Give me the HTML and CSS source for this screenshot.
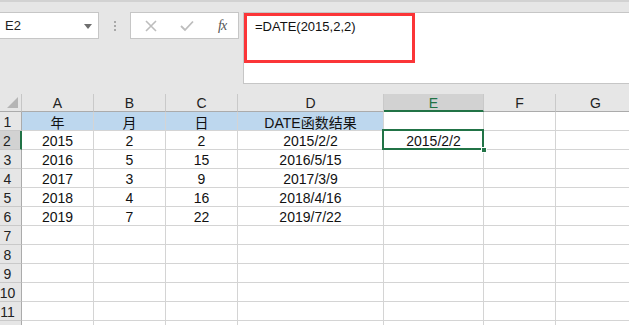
FILE: index.html
```html
<!DOCTYPE html>
<html lang="zh">
<head>
<meta charset="utf-8">
<link rel="stylesheet" href="styles.css">
</head>
<body>
<div class="toolbar">
  <div class="namebox">
    <span class="name">E2</span>
    <svg class="caret" width="8" height="5" viewBox="0 0 8 5"><path d="M0 0H8L4 5Z" fill="#6e6e6e"/></svg>
  </div>
  <div class="sep"><span></span><span></span><span></span></div>
  <div class="btns">
    <svg class="ico" width="12" height="12" viewBox="0 0 12 12"><path d="M1 1L11 11M11 1L1 11" stroke="#bdbdbd" stroke-width="1.6"/></svg>
    <svg class="ico" width="14" height="12" viewBox="0 0 14 12"><path d="M1 6L5 10L13 1.5" stroke="#bdbdbd" stroke-width="1.8" fill="none"/></svg>
    <span class="fx">fx</span>
  </div>
  <div class="formula">
    <div class="hl">=DATE(2015,2,2)</div>
  </div>
</div>
<div class="sheet">
  <div class="corner"><span class="tri"></span></div>
  <div class="ch">A</div><div class="ch">B</div><div class="ch">C</div><div class="ch">D</div><div class="ch sel">E</div><div class="ch">F</div><div class="ch last">G</div>

  <div class="rh">1</div>
  <div class="c blue">年</div><div class="c blue">月</div><div class="c blue">日</div><div class="c blue">DATE函数结果</div><div class="c"></div><div class="c"></div><div class="c last"></div>

  <div class="rh rsel">2</div>
  <div class="c">2015</div><div class="c">2</div><div class="c">2</div><div class="c">2015/2/2</div><div class="c active">2015/2/2<span class="handle"></span></div><div class="c"></div><div class="c last"></div>

  <div class="rh">3</div>
  <div class="c">2016</div><div class="c">5</div><div class="c">15</div><div class="c">2016/5/15</div><div class="c"></div><div class="c"></div><div class="c last"></div>

  <div class="rh">4</div>
  <div class="c">2017</div><div class="c">3</div><div class="c">9</div><div class="c">2017/3/9</div><div class="c"></div><div class="c"></div><div class="c last"></div>

  <div class="rh">5</div>
  <div class="c">2018</div><div class="c">4</div><div class="c">16</div><div class="c">2018/4/16</div><div class="c"></div><div class="c"></div><div class="c last"></div>

  <div class="rh">6</div>
  <div class="c">2019</div><div class="c">7</div><div class="c">22</div><div class="c">2019/7/22</div><div class="c"></div><div class="c"></div><div class="c last"></div>

  <div class="rh">7</div>
  <div class="c"></div><div class="c"></div><div class="c"></div><div class="c"></div><div class="c"></div><div class="c"></div><div class="c last"></div>

  <div class="rh">8</div>
  <div class="c"></div><div class="c"></div><div class="c"></div><div class="c"></div><div class="c"></div><div class="c"></div><div class="c last"></div>

  <div class="rh">9</div>
  <div class="c"></div><div class="c"></div><div class="c"></div><div class="c"></div><div class="c"></div><div class="c"></div><div class="c last"></div>

  <div class="rh">10</div>
  <div class="c"></div><div class="c"></div><div class="c"></div><div class="c"></div><div class="c"></div><div class="c"></div><div class="c last"></div>

  <div class="rh">11</div>
  <div class="c"></div><div class="c"></div><div class="c"></div><div class="c"></div><div class="c"></div><div class="c"></div><div class="c last"></div>

  <div class="rh"></div>
  <div class="c"></div><div class="c"></div><div class="c"></div><div class="c"></div><div class="c"></div><div class="c"></div><div class="c last"></div>
</div>
</body>
</html>
```

FILE: styles.css
```css
* { box-sizing: border-box; }
html, body { margin: 0; padding: 0; }
body {
  width: 629px;
  height: 325px;
  overflow: hidden;
  background: #e6e6e6;
  font-family: "Liberation Sans", "Noto Sans CJK SC", sans-serif;
  color: #111;
}
.toolbar {
  height: 94px;
  border-top: 2px solid #d2d2d2;
  padding-top: 10px;
  display: flex;
  align-items: flex-start;
}
.namebox {
  width: 99px;
  height: 27px;
  background: #fff;
  border: 1px solid #c6c6c6;
  border-left: none;
  display: flex;
  align-items: center;
  justify-content: space-between;
  padding: 0 6px 0 5px;
}
.name { font-size: 13px; color: #222; }
.caret { margin-top: 1px; }
.sep {
  width: 31px;
  height: 27px;
  display: flex;
  flex-direction: column;
  align-items: center;
  justify-content: center;
  gap: 2px;
  padding-left: 1px;
}
.sep span { width: 2px; height: 2px; background: #a8a8a8; }
.btns {
  width: 109px;
  height: 27px;
  background: #fff;
  border: 1px solid #c6c6c6;
  display: flex;
  align-items: center;
  padding-left: 14px;
  gap: 23px;
}
.fx {
  font-family: "Liberation Serif", serif;
  font-style: italic;
  font-size: 14px;
  color: #555;
  margin-left: 1px;
  letter-spacing: -1px;
}
.formula {
  margin-left: 4px;
  flex: 1;
  height: 72px;
  background: #fff;
  border: 1px solid #c6c6c6;
  border-right: none;
}
.hl {
  width: 171px;
  height: 50px;
  border: 3px solid #fb3538;
  padding: 3px 0 0 8px;
  font-size: 13px;
  color: #111;
}
.sheet {
  display: grid;
  grid-template-columns: 22px 72px 72px 72px 146px 100px 72px 80px;
  grid-template-rows: 18px repeat(12, 19px);
  font-size: 14px;
}
.corner, .ch, .rh {
  background: #e6e6e6;
  color: #222;
}
.corner {
  position: relative;
  border-right: 1px solid #c6c6c6;
  border-bottom: 1px solid #ababab;
}
.tri {
  position: absolute;
  right: 3px;
  bottom: 3px;
  width: 0;
  height: 0;
  border-left: 11px solid transparent;
  border-bottom: 11px solid #b5b5b5;
}
.ch {
  display: flex;
  align-items: center;
  justify-content: center;
  border-right: 1px solid #c9c9c9;
  border-bottom: 1px solid #ababab;
  padding-top: 1px;
}
.ch.sel {
  background: #d2d2d2;
  color: #217346;
  border-bottom: 2px solid #217346;
}
.rh {
  display: flex;
  align-items: center;
  justify-content: center;
  padding-right: 6px;
  padding-top: 1px;
  border-right: 1px solid #ababab;
  border-bottom: 1px solid #c9c9c9;
  font-size: 14px;
  white-space: nowrap;
}
.rh.rsel {
  background: #d2d2d2;
  border-right: 2px solid #217346;
}
.c {
  background: #fff;
  border-right: 1px solid #d4d4d4;
  border-bottom: 1px solid #d4d4d4;
  display: flex;
  align-items: center;
  justify-content: center;
  white-space: nowrap;
  padding-top: 1px;
}
.c.blue { background: #bdd7ee; }
.c.active {
  position: relative;
}
.c.active::before {
  content: "";
  position: absolute;
  left: -2px;
  top: -2px;
  right: -1px;
  bottom: -1px;
  border: 2px solid #217346;
}
.handle {
  position: absolute;
  right: -4px;
  bottom: -4px;
  width: 6px;
  height: 6px;
  background: #217346;
  border: 1px solid #fff;
  z-index: 2;
}
```
